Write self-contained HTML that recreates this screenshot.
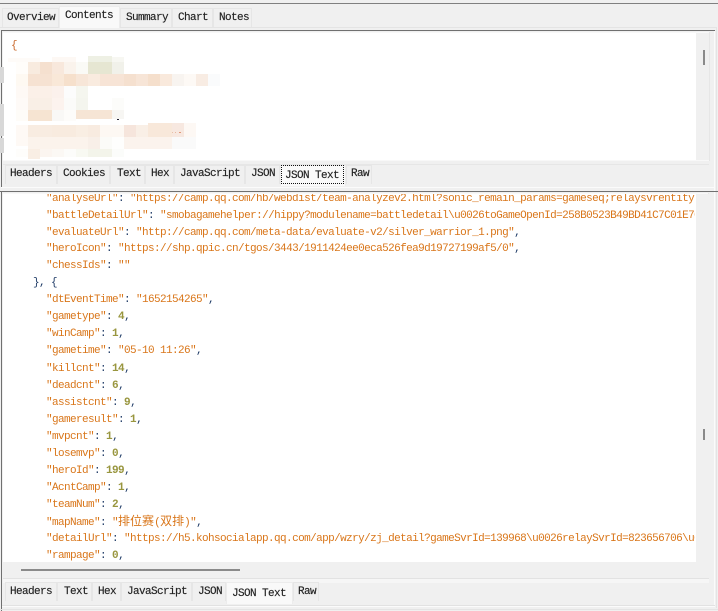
<!DOCTYPE html>
<html><head><meta charset="utf-8">
<style>
html,body{margin:0;padding:0;width:718px;height:611px;overflow:hidden;background:#f0f0f0}
body{position:relative}
.b{position:absolute}
.t{position:absolute;font:11px/18px "Liberation Mono","Noto Sans CJK SC",monospace;letter-spacing:-.6px;color:#222;white-space:nowrap;-webkit-text-stroke:.15px #222}
.tab{position:absolute;background:#f0f0f0;border:1px solid #e6e6e6;border-bottom:0;box-sizing:border-box}
.sel{background:#f9f9f9;border-color:#ececec;z-index:2}
#code{position:absolute;left:3px;top:194px;width:692px;height:368px;overflow:hidden}
.l{position:absolute;white-space:nowrap;font:11px/17px "Liberation Mono","Noto Sans CJK SC",monospace;letter-spacing:-.6px;color:#d9761a}
.l i{font-style:normal;color:#1f3b66}
.l b{font-weight:bold;color:#99963f}
</style></head><body>
<div class="b" style="left:0;top:3px;width:718px;height:1px;background:#808080"></div>
<div class="b" style="left:0;top:27px;width:716px;height:1px;background:#e4e4e4"></div>
<div class="b" style="left:716px;top:27px;width:1px;height:581px;background:#e4e4e4"></div>
<div class="b" style="left:714px;top:30px;width:1px;height:575px;background:#fbfbfb"></div>
<div class="b" style="left:1px;top:30px;width:714px;height:1px;background:#707070"></div>
<div class="b" style="left:1px;top:30px;width:1px;height:157px;background:#707070"></div>
<div class="b" style="left:3px;top:32px;width:706px;height:129px;background:#f8f8f8;border-right:1px solid #e6e6e6"></div>
<div class="b" style="left:3px;top:33px;width:693px;height:127px;background:#fff"></div>
<div class="b" style="left:696px;top:33px;width:13px;height:127px;background:#f0f0f0"></div>
<div class="b" style="left:703px;top:50px;width:2px;height:15px;background:#8a8a8a"></div>
<div class="b" style="left:3px;top:164px;width:706px;height:1px;background:#e6e6e6"></div>
<div class="b" style="left:1px;top:187px;width:714px;height:1px;background:#fbfbfb"></div>

<div class="tab" style="left:2px;top:8px;width:57px;height:19px"></div>
<div class="tab sel" style="left:59px;top:6px;width:61px;height:22px"></div>
<div class="tab" style="left:120px;top:8px;width:52px;height:19px"></div>
<div class="tab" style="left:172px;top:8px;width:41px;height:19px"></div>
<div class="tab" style="left:213px;top:8px;width:39px;height:19px"></div>
<div class="t" style="left:7px;top:9px">Overview</div>
<div class="t" style="left:65px;top:7px;z-index:3">Contents</div>
<div class="t" style="left:126px;top:9px">Summary</div>
<div class="t" style="left:178px;top:9px">Chart</div>
<div class="t" style="left:219px;top:9px">Notes</div>

<svg class="b" style="left:0;top:30px" width="225" height="135" shape-rendering="crispEdges">
<g transform="translate(0,-30)">
<rect x="0" y="67" width="4" height="16" fill="#d8d8d8"/><rect x="0" y="104" width="4" height="32" fill="#d8d8d8"/><rect x="0" y="138" width="4" height="15" fill="#d8d8d8"/>
<rect x="8" y="58" width="32" height="4" fill="#fefbf8"/><rect x="52" y="57" width="24" height="5" fill="#fdf8f4"/><rect x="88" y="56" width="24" height="6" fill="#eef0e4"/><rect x="112" y="57" width="12" height="5" fill="#f7f7f2"/>
<rect x="16" y="62" width="12" height="12" fill="#fffdfa"/><rect x="28" y="62" width="12" height="12" fill="#f8ebdf"/><rect x="40" y="62" width="12" height="12" fill="#f5e0cf"/><rect x="52" y="62" width="12" height="12" fill="#f8e8dc"/><rect x="64" y="62" width="12" height="12" fill="#faf3ec"/><rect x="76" y="62" width="12" height="12" fill="#fafaf6"/><rect x="88" y="62" width="24" height="12" fill="#e6e6d2"/><rect x="112" y="62" width="12" height="12" fill="#f1f1ea"/>
<rect x="16" y="74" width="12" height="12" fill="#fef9f2"/><rect x="28" y="74" width="24" height="12" fill="#f6e2d2"/><rect x="52" y="74" width="12" height="12" fill="#f9e8d8"/><rect x="64" y="74" width="12" height="12" fill="#f6e0cc"/><rect x="76" y="74" width="12" height="12" fill="#f7e6d8"/><rect x="88" y="74" width="12" height="12" fill="#f9ebdf"/><rect x="100" y="74" width="24" height="12" fill="#f7e4d6"/><rect x="124" y="74" width="12" height="12" fill="#f5e0cf"/><rect x="136" y="74" width="12" height="12" fill="#f7e5d7"/><rect x="148" y="74" width="12" height="12" fill="#f5dfcc"/><rect x="160" y="74" width="12" height="12" fill="#f9e9dc"/><rect x="172" y="74" width="12" height="12" fill="#f8f4f0"/><rect x="184" y="74" width="12" height="12" fill="#fdf9f5"/><rect x="196" y="74" width="12" height="12" fill="#f8ece3"/><rect x="208" y="74" width="12" height="12" fill="#fafbfc"/>
<rect x="16" y="86" width="12" height="12" fill="#fef9f5"/><rect x="28" y="86" width="24" height="12" fill="#fbf0e8"/><rect x="52" y="86" width="12" height="12" fill="#fbf1ec"/><rect x="64" y="86" width="12" height="12" fill="#fcfcfc"/><rect x="76" y="86" width="12" height="12" fill="#f5f6ef"/>
<rect x="16" y="98" width="12" height="12" fill="#fefaf7"/><rect x="28" y="98" width="24" height="12" fill="#f9efe6"/><rect x="52" y="98" width="12" height="12" fill="#fcf3ee"/><rect x="64" y="98" width="12" height="12" fill="#fbfbf9"/><rect x="76" y="98" width="12" height="12" fill="#f4f5ee"/><rect x="112" y="98" width="12" height="12" fill="#fcfcfa"/>
<rect x="16" y="110" width="12" height="11" fill="#fefcf8"/><rect x="28" y="110" width="24" height="11" fill="#f6e4d2"/><rect x="52" y="110" width="12" height="11" fill="#f9f8f6"/><rect x="64" y="110" width="12" height="11" fill="#fdfcfa"/><rect x="76" y="110" width="36" height="9" fill="#f6e5d5"/><rect x="112" y="110" width="12" height="9" fill="#f7f6f3"/>
<rect x="117" y="119" width="2" height="1" fill="#223"/>
<rect x="16" y="125" width="12" height="12" fill="#fef9f5"/><rect x="28" y="125" width="24" height="12" fill="#f8ece1"/><rect x="52" y="125" width="24" height="12" fill="#f8ebdf"/><rect x="76" y="125" width="12" height="12" fill="#f9eee3"/><rect x="88" y="125" width="12" height="12" fill="#f8ebe0"/><rect x="100" y="125" width="24" height="12" fill="#fdf8f3"/><rect x="124" y="125" width="12" height="12" fill="#f6e5dc"/><rect x="136" y="125" width="12" height="12" fill="#f9efe6"/><rect x="148" y="123" width="24" height="14" fill="#f8e8da"/><rect x="172" y="123" width="12" height="14" fill="#f7e8e0"/><rect x="184" y="123" width="12" height="14" fill="#fdf8f4"/>
<rect x="172" y="132" width="1" height="1" fill="#e8c0a8"/><rect x="175" y="132" width="1" height="1" fill="#e8b8a0"/><rect x="179" y="132" width="2" height="1" fill="#e09878"/>
<rect x="16" y="137" width="12" height="9" fill="#fef9f5"/><rect x="28" y="137" width="64" height="12" fill="#fbf3ec"/><rect x="88" y="137" width="12" height="12" fill="#f8efe8"/><rect x="100" y="137" width="12" height="12" fill="#fbfbf8"/><rect x="112" y="137" width="12" height="12" fill="#fefefd"/><rect x="124" y="137" width="48" height="12" fill="#fbf3ed"/><rect x="172" y="137" width="24" height="12" fill="#fafafa"/>
<rect x="16" y="149" width="12" height="8" fill="#fefdfb"/><rect x="28" y="149" width="12" height="10" fill="#f9eee4"/><rect x="40" y="149" width="12" height="8" fill="#fbf5f0"/><rect x="52" y="149" width="12" height="8" fill="#fbf8f4"/><rect x="64" y="149" width="12" height="8" fill="#fcfcfa"/><rect x="76" y="149" width="12" height="8" fill="#f8f9f2"/><rect x="88" y="149" width="24" height="8" fill="#f3f4ea"/><rect x="112" y="149" width="12" height="8" fill="#fbfcfa"/>
</g></svg>
<div class="l" style="left:11px;top:38px;color:#c9682a">{</div>

<div class="tab" style="left:5px;top:165px;width:52px;height:19px"></div>
<div class="tab" style="left:57px;top:165px;width:53px;height:19px"></div>
<div class="tab" style="left:110px;top:165px;width:35px;height:19px"></div>
<div class="tab" style="left:145px;top:165px;width:29px;height:19px"></div>
<div class="tab" style="left:174px;top:165px;width:71px;height:19px"></div>
<div class="tab" style="left:245px;top:165px;width:35px;height:19px"></div>
<div class="tab sel" style="left:280px;top:165px;width:66px;height:21px"></div>
<div class="b" style="left:281px;top:165px;width:61px;height:17px;border:1px dotted #111;z-index:3"></div>
<div class="tab" style="left:346px;top:165px;width:26px;height:19px"></div>
<div class="t" style="left:10px;top:165px">Headers</div>
<div class="t" style="left:63px;top:165px">Cookies</div>
<div class="t" style="left:117px;top:165px">Text</div>
<div class="t" style="left:151px;top:165px">Hex</div>
<div class="t" style="left:180px;top:165px">JavaScript</div>
<div class="t" style="left:251px;top:165px">JSON</div>
<div class="t" style="left:285px;top:167px;z-index:4">JSON Text</div>
<div class="t" style="left:351px;top:165px">Raw</div>

<div class="b" style="left:0;top:191px;width:718px;height:1px;background:#707070"></div>
<div class="b" style="left:1px;top:191px;width:1px;height:424px;background:#707070"></div>
<div class="b" style="left:3px;top:193px;width:706px;height:389px;background:#f8f8f8;border-right:1px solid #e6e6e6;box-sizing:border-box"></div>
<div class="b" style="left:3px;top:194px;width:693px;height:368px;background:#fff"></div>
<div class="b" style="left:3px;top:562px;width:706px;height:16px;background:#f0f0f0"></div>
<div class="b" style="left:696px;top:194px;width:13px;height:384px;background:#f0f0f0"></div>
<div class="b" style="left:3px;top:578px;width:706px;height:4px;background:#f6f6f6;border-top:1px solid #e2e2e2"></div>
<div class="b" style="left:21px;top:569px;width:219px;height:2px;background:#8a8a8a"></div>
<div class="b" style="left:703px;top:429px;width:2px;height:11px;background:#8a8a8a"></div>
<div id="code">
<div class="l" style="left:43px;top:-3px">"analyseUrl"<i>:</i> "https://camp.qq.com/hb/webdist/team-analyzev2.html?sonic_remain_params=gameseq;relaysvrentity</div>
<div class="l" style="left:43px;top:14px">"battleDetailUrl"<i>:</i> "smobagamehelper://hippy?modulename=battledetail\u0026toGameOpenId=258B0523B49BD41C7C01E7C0A1</div>
<div class="l" style="left:43px;top:31px">"evaluateUrl"<i>:</i> "http://camp.qq.com/meta-data/evaluate-v2/silver_warrior_1.png"<i>,</i></div>
<div class="l" style="left:43px;top:47px">"heroIcon"<i>:</i> "https://shp.qpic.cn/tgos/3443/1911424ee0eca526fea9d19727199af5/0"<i>,</i></div>
<div class="l" style="left:43px;top:64px">"chessIds"<i>:</i> ""</div>
<div class="l" style="left:30px;top:81px"><i>}, {</i></div>
<div class="l" style="left:43px;top:98px">"dtEventTime"<i>:</i> "1652154265"<i>,</i></div>
<div class="l" style="left:43px;top:115px">"gametype"<i>:</i> <b>4</b><i>,</i></div>
<div class="l" style="left:43px;top:132px">"winCamp"<i>:</i> <b>1</b><i>,</i></div>
<div class="l" style="left:43px;top:149px">"gametime"<i>:</i> "05-10 11:26"<i>,</i></div>
<div class="l" style="left:43px;top:167px">"killcnt"<i>:</i> <b>14</b><i>,</i></div>
<div class="l" style="left:43px;top:184px">"deadcnt"<i>:</i> <b>6</b><i>,</i></div>
<div class="l" style="left:43px;top:201px">"assistcnt"<i>:</i> <b>9</b><i>,</i></div>
<div class="l" style="left:43px;top:218px">"gameresult"<i>:</i> <b>1</b><i>,</i></div>
<div class="l" style="left:43px;top:235px">"mvpcnt"<i>:</i> <b>1</b><i>,</i></div>
<div class="l" style="left:43px;top:252px">"losemvp"<i>:</i> <b>0</b><i>,</i></div>
<div class="l" style="left:43px;top:269px">"heroId"<i>:</i> <b>199</b><i>,</i></div>
<div class="l" style="left:43px;top:286px">"AcntCamp"<i>:</i> <b>1</b><i>,</i></div>
<div class="l" style="left:43px;top:303px">"teamNum"<i>:</i> <b>2</b><i>,</i></div>
<div class="l" style="left:43px;top:320px">"mapName"<i>:</i> "<span style="font-size:12px;letter-spacing:0">排位赛</span>(<span style="font-size:12px;letter-spacing:0">双排</span>)"<i>,</i></div>
<div class="l" style="left:43px;top:337px">"detailUrl"<i>:</i> "https://h5.kohsocialapp.qq.com/app/wzry/zj_detail?gameSvrId=139968\u0026relaySvrId=823656706\u0026</div>
<div class="l" style="left:43px;top:354px">"rampage"<i>:</i> <b>0</b><i>,</i></div>
</div>

<div class="tab" style="left:5px;top:582px;width:52px;height:19px"></div>
<div class="tab" style="left:57px;top:582px;width:35px;height:19px"></div>
<div class="tab" style="left:92px;top:582px;width:29px;height:19px"></div>
<div class="tab" style="left:121px;top:582px;width:71px;height:19px"></div>
<div class="tab" style="left:192px;top:582px;width:34px;height:19px"></div>
<div class="tab sel" style="left:226px;top:582px;width:67px;height:22px"></div>
<div class="tab" style="left:293px;top:582px;width:26px;height:19px"></div>
<div class="t" style="left:10px;top:583px">Headers</div>
<div class="t" style="left:64px;top:583px">Text</div>
<div class="t" style="left:98px;top:583px">Hex</div>
<div class="t" style="left:127px;top:583px">JavaScript</div>
<div class="t" style="left:198px;top:583px">JSON</div>
<div class="t" style="left:232px;top:585px;z-index:3">JSON Text</div>
<div class="t" style="left:298px;top:583px">Raw</div>

<div class="b" style="left:2px;top:605px;width:713px;height:1px;background:#e2e2e2"></div>
<div class="b" style="left:2px;top:606px;width:713px;height:1px;background:#fbfbfb"></div>
<div class="b" style="left:0;top:609px;width:718px;height:1px;background:#e4e4e4"></div>
</body></html>
